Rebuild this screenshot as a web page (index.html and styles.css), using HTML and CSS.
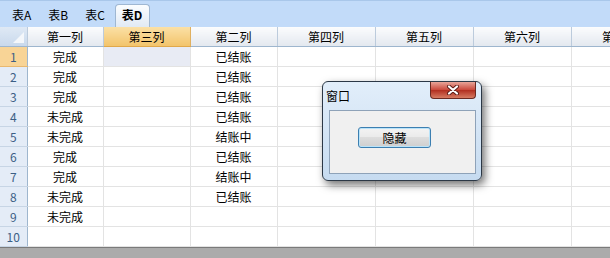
FILE: index.html
```html
<!DOCTYPE html>
<html lang="zh-CN">
<head>
  <meta charset="UTF-8" />
  <title>表格</title>
  <link rel="stylesheet" href="styles.css">
</head>
<body>

  <div class="tabs">
    <span class="tab">表A</span>
    <span class="tab">表B</span>
    <span class="tab">表C</span>
    <span class="tab active">表D</span>
  </div>

  <div class="sheet">
    <table class="grid">
      <colgroup>
        <col style="width:27px">
        <col style="width:76px">
        <col style="width:87px">
        <col style="width:87px">
        <col style="width:98px">
        <col style="width:98px">
        <col style="width:98px">
        <col style="width:98px">
      </colgroup>
      <thead>
        <tr>
          <th class="corner"><span class="tri"></span></th>
          <th>第一列</th>
          <th class="sel">第三列</th>
          <th>第二列</th>
          <th>第四列</th>
          <th>第五列</th>
          <th>第六列</th>
          <th>第七列</th>
        </tr>
      </thead>
      <tbody>
        <tr><td class="rh sel">1</td><td>完成</td><td class="cur"></td><td>已结账</td><td></td><td></td><td></td><td></td></tr>
        <tr><td class="rh">2</td><td>完成</td><td></td><td>已结账</td><td></td><td></td><td></td><td></td></tr>
        <tr><td class="rh">3</td><td>完成</td><td></td><td>已结账</td><td></td><td></td><td></td><td></td></tr>
        <tr><td class="rh">4</td><td>未完成</td><td></td><td>已结账</td><td></td><td></td><td></td><td></td></tr>
        <tr><td class="rh">5</td><td>未完成</td><td></td><td>结账中</td><td></td><td></td><td></td><td></td></tr>
        <tr><td class="rh">6</td><td>完成</td><td></td><td>已结账</td><td></td><td></td><td></td><td></td></tr>
        <tr><td class="rh">7</td><td>完成</td><td></td><td>结账中</td><td></td><td></td><td></td><td></td></tr>
        <tr><td class="rh">8</td><td>未完成</td><td></td><td>已结账</td><td></td><td></td><td></td><td></td></tr>
        <tr><td class="rh">9</td><td>未完成</td><td></td><td></td><td></td><td></td><td></td><td></td></tr>
        <tr><td class="rh">10</td><td></td><td></td><td></td><td></td><td></td><td></td><td></td></tr>
      </tbody>
    </table>
  </div>

  <div class="statusbar"></div>

  <div class="window">
    <div class="titlebar">
      <span class="title">窗口</span>
      <span class="close">
        <svg width="14" height="10" viewBox="0 0 14 10">
          <path d="M3 1.5 L11 8.5 M11 1.5 L3 8.5" stroke="#5a1a14" stroke-width="4" stroke-linecap="round"/>
          <path d="M3 1.5 L11 8.5 M11 1.5 L3 8.5" stroke="#ffffff" stroke-width="2.2" stroke-linecap="round"/>
        </svg>
      </span>
    </div>
    <div class="panel">
      <button class="btn">隐藏</button>
    </div>
  </div>

</body>
</html>
```

FILE: styles.css
```css
body {
  margin: 0;
  font-family: "Noto Sans CJK SC", "DejaVu Sans", sans-serif;
  font-size: 12px;
  color: #000;
  background: #ababab;
  overflow: hidden;
}

.tabs {
  height: 27px;
  background: #c2dbf9;
  border-top: 1px solid #a9c7ea;
  display: flex;
  align-items: flex-end;
  padding-left: 6px;
  box-sizing: border-box;
}

.tab {
  height: 22px;
  line-height: 20px;
  padding: 0 6px;
  margin-right: 5px;
}

.tab.active {
  font-weight: bold;
  background: linear-gradient(#fbfdff, #e1eaf5);
  border: 1px solid #9fb7d2;
  border-bottom: none;
  border-radius: 4px 4px 0 0;
  margin-left: -1px;
  padding: 0 7px 0 6px;
}

.sheet {
  width: 610px;
  overflow: hidden;
  background: #fff;
}

.grid {
  width: 669px;
  border-collapse: collapse;
  table-layout: fixed;
  background: #fff;
}

.grid th {
  height: 19px;
  padding: 0;
  font-weight: normal;
  text-align: center;
  background: linear-gradient(#fbfcfd, #e3e8ef);
  border-right: 1px solid #bccbdc;
  border-bottom: 1px solid #9eb6ce;
  white-space: nowrap;
  overflow: hidden;
}

.grid th.sel {
  background: linear-gradient(#fbe0a6, #f2c46b);
  border-bottom-color: #e0a84a;
  border-right-color: #e0b060;
}

.grid th.corner {
  position: relative;
  background: linear-gradient(#dfe9f5, #c9d9ec);
}

.tri {
  position: absolute;
  right: 3px;
  bottom: 3px;
  width: 0;
  height: 0;
  border-left: 11px solid transparent;
  border-bottom: 11px solid #f4f7fb;
}

.grid td {
  height: 19px;
  padding: 0;
  text-align: center;
  border-right: 1px solid #e3e3e3;
  border-bottom: 1px solid #e3e3e3;
  white-space: nowrap;
}

.grid td.rh {
  color: #3c5f86;
  background: #e4ecf7;
  border-right: 1px solid #9eb6ce;
  border-bottom: 1px solid #c7d5e5;
}

.grid td.rh.sel {
  background: #f8d496;
  border-bottom-color: #e8b870;
}

.grid td.cur {
  background: #e8ebf4;
}

.statusbar {
  height: 11px;
  border-top: 1px solid #7a7a7a;
  background: #ababab;
}

.window {
  position: absolute;
  left: 322px;
  top: 81px;
  width: 158px;
  height: 98px;
  border: 1px solid #2c3846;
  border-radius: 6px;
  background: linear-gradient(#e2eefa, #c6dbf0);
  box-shadow: 3px 4px 9px rgba(0, 0, 0, 0.55);
}

.titlebar {
  height: 28px;
  display: flex;
  justify-content: space-between;
  align-items: flex-start;
}

.title {
  margin: 6px 0 0 3px;
  line-height: 16px;
}

.close {
  width: 46px;
  height: 17px;
  margin-right: 5px;
  border: 1px solid #6b2a22;
  border-top: none;
  border-radius: 0 0 4px 4px;
  background: linear-gradient(#e8a599, #c9473a 50%, #b12e20 51%, #d67b62);
  display: flex;
  align-items: center;
  justify-content: center;
  box-sizing: border-box;
}

.panel {
  margin: 0 5px 0 6px;
  height: 64px;
  border: 1px solid #8ea2b8;
  background: #f0f0f0;
  padding: 16px 0 0 28px;
  box-sizing: border-box;
}

.btn {
  width: 73px;
  height: 21px;
  padding: 0;
  font-family: "Noto Sans CJK SC", sans-serif;
  font-size: 12px;
  color: #000;
  border: 1px solid #3c7fb1;
  border-radius: 3px;
  background: linear-gradient(#f3f3f3, #ebebeb 45%, #dddddd 50%, #cfcfcf);
  box-shadow: inset 0 0 0 1px #b9e3f9;
}
```
